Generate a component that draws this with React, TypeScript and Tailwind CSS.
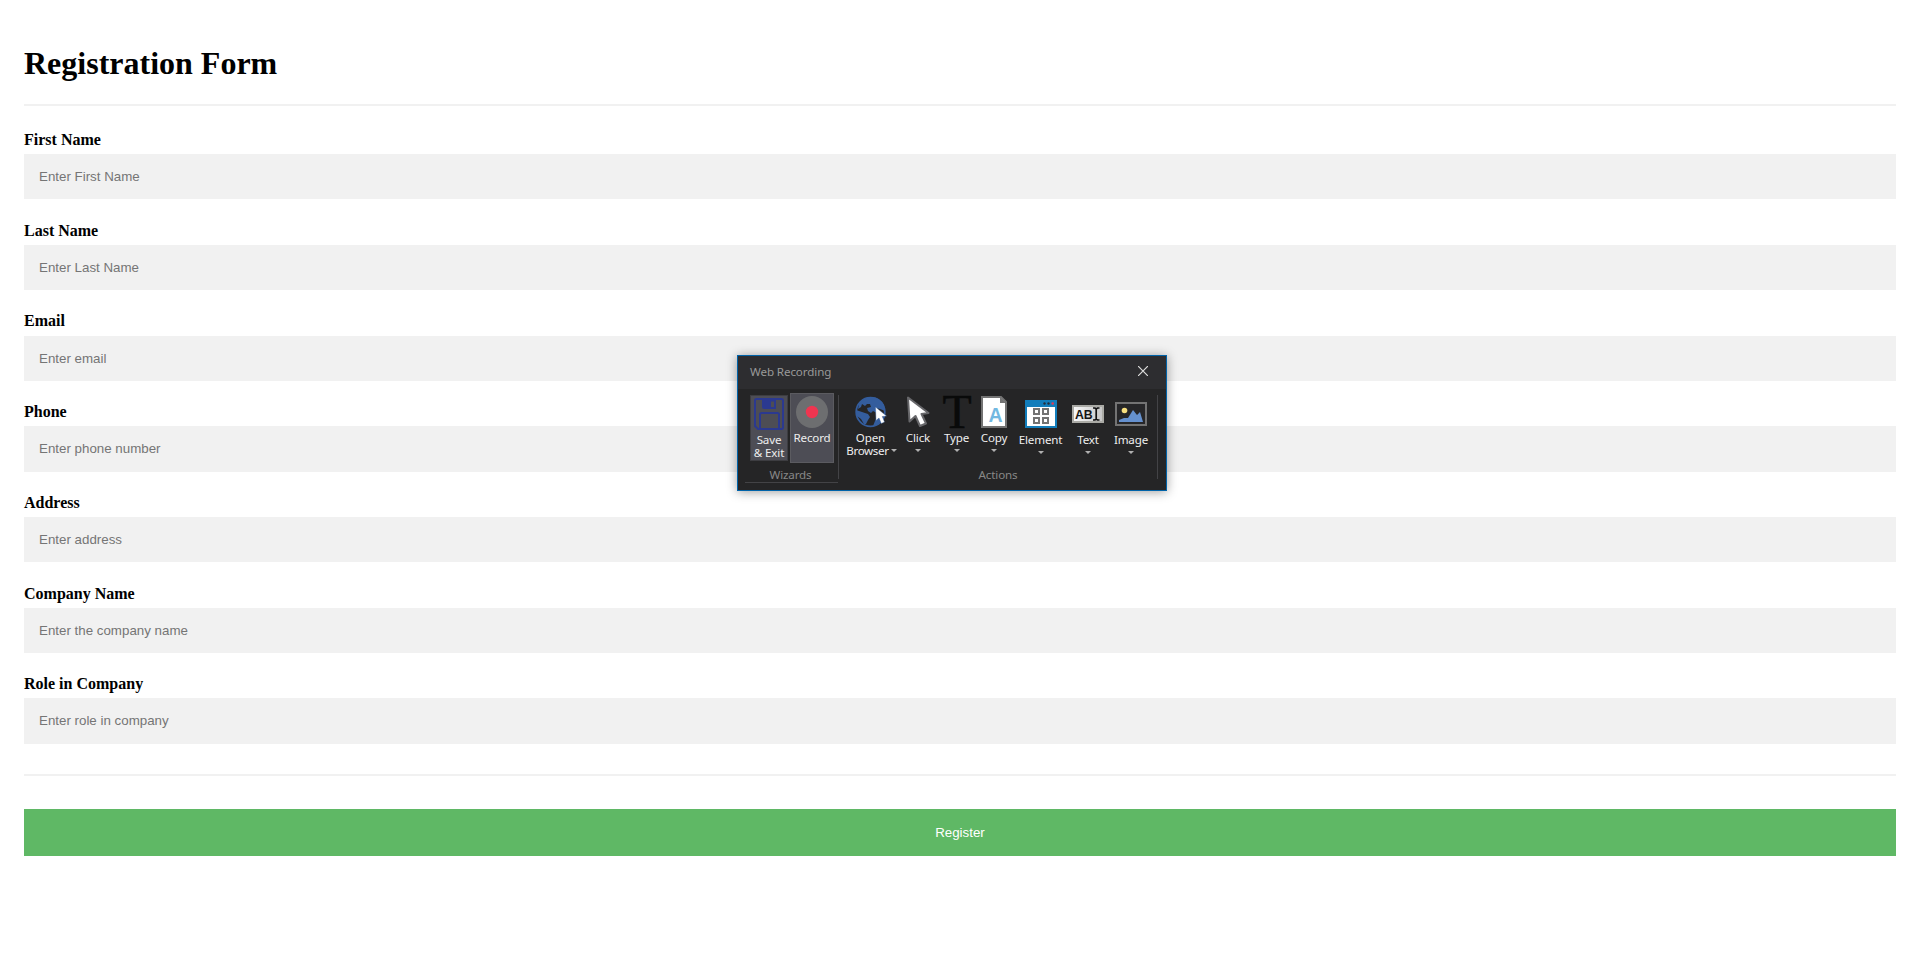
import React from "react";

const fields = [
  { label: "First Name", placeholder: "Enter First Name" },
  { label: "Last Name", placeholder: "Enter Last Name" },
  { label: "Email", placeholder: "Enter email" },
  { label: "Phone", placeholder: "Enter phone number" },
  { label: "Address", placeholder: "Enter address" },
  { label: "Company Name", placeholder: "Enter the company name" },
  { label: "Role in Company", placeholder: "Enter role in company" },
];

function SaveIcon() {
  return (
    <svg width="30" height="32" viewBox="0 0 30 32" fill="none" stroke="#2b3990" strokeWidth="2" className="shrink-0">
      <path d="M2.5 1H27.5Q29 1 29 2.5V29.5Q29 31 27.5 31H4L1 28V2.5Q1 1 2.5 1Z" />
      <path d="M8 1H22V11H10Q8 11 8 9Z" fill="#2b3990" stroke="none" />
      <path d="M17 3.5H20V9H17Z" fill="#4d4d55" stroke="none" />
      <path d="M6 31V16.500Q6 15 7.500 15H23.500Q25 15 25 16.500V31" />
    </svg>
  );
}

function RecordIcon() {
  return (
    <svg width="32" height="32" viewBox="0 0 32 32" className="shrink-0">
      <circle cx="16" cy="16" r="16" fill="#6d6e70" />
      <circle cx="16" cy="16" r="6.200" fill="#ef3550" />
    </svg>
  );
}

function GlobeIcon() {
  return (
    <svg width="32" height="32" viewBox="0 0 32 32" className="shrink-0">
      <circle cx="15.500" cy="16" r="14.300" fill="#252526" stroke="#345d9d" strokeWidth="1.800" />
      <path
        d="M4 8Q8 1 16 1Q25 1 29 9L30 15L25 13L21 12L22 17L18 15L16 17L13 15L12 12L16 11L15 8L12 8L10 10L7 8L6 11L3 13ZM1 14L7 16L13 18L15 21L13 24L11 28L9 28L6 23L2 20ZM22 20L27 24L22 29L18 30L20 25Z"
        fill="#345d9d"
      />
      <path
        d="M20.500 11L21 24.500L24 22L26.300 27.500L29.500 26L27.300 20.500L31.500 20Z"
        fill="#fff"
        stroke="#345d9d"
        strokeWidth=".4"
      />
    </svg>
  );
}

function ClickIcon() {
  return (
    <svg width="24" height="32" viewBox="0 0 24 32">
      <path
        d="M2 1.500L3.500 25.500L9.500 20L14 30L20 27.500L15.500 18L22.500 17Z"
        fill="#fff"
        stroke="#67676a"
        strokeWidth="2"
        strokeLinejoin="round"
      />
    </svg>
  );
}

function TypeIcon() {
  return (
    <svg width="30" height="32" viewBox="0 0 30 32" className="overflow-visible">
      <text
        x="0.500"
        y="31.500"
        fontSize="48"
        textLength="29"
        lengthAdjust="spacingAndGlyphs"
        fill="#090a0a"
        stroke="#090a0a"
        strokeWidth=".5"
        fontFamily="Liberation Serif, serif"
      >
        T
      </text>
    </svg>
  );
}

function CopyIcon() {
  return (
    <svg width="26" height="32" viewBox="0 0 26 32">
      <path d="M1 1H20L25 6V31H1Z" fill="#fff" stroke="#737373" strokeWidth="2" />
      <path d="M19 1V7H25Z" fill="#737373" />
      <text
        x="14.500"
        y="26"
        textAnchor="middle"
        fontSize="19.500"
        fontWeight="700"
        fill="#72b8e1"
        fontFamily="Liberation Sans, sans-serif"
      >
        A
      </text>
    </svg>
  );
}

function ElementIcon() {
  return (
    <svg width="32" height="28" viewBox="0 0 32 28">
      <path d="M0 0H32V28H0Z" fill="#127dbb" />
      <path d="M2 7H30V26H2Z" fill="#fff" />
      <g fill="#252f3b">
        <circle cx="19.500" cy="3.500" r="1.200" />
        <circle cx="23.500" cy="3.500" r="1.200" />
      </g>
      <circle cx="27.700" cy="3.500" r="1.300" fill="#e23a55" />
      <path
        d="M9 9H14V14H9ZM18 9H23V14H18ZM9 18H14V23H9ZM18 18H23V23H18Z"
        fill="none"
        stroke="#737373"
        strokeWidth="2"
      />
    </svg>
  );
}

function TextIcon() {
  return (
    <svg width="32" height="18" viewBox="0 0 32 18">
      <defs>
        <linearGradient id="plate">
          <stop stopColor="#fafafa" />
          <stop offset="1" stopColor="#c5c5c5" />
        </linearGradient>
      </defs>
      <path d="M1 1H31V17H1Z" fill="url(#plate)" stroke="#aaaaa5" strokeWidth="2" />
      <text
        x="3"
        y="13.500"
        fontSize="12.500"
        fontWeight="700"
        textLength="17.500"
        lengthAdjust="spacingAndGlyphs"
        fill="#151515"
        fontFamily="Liberation Sans, sans-serif"
      >
        AB
      </text>
      <path
        d="M21 3H23L24.200 4L25.500 3H27.500M24.200 4V14M21 15H23L24.200 14L25.500 15H27.500"
        fill="none"
        stroke="#111"
        strokeWidth="1.700"
      />
    </svg>
  );
}

function ImageIcon() {
  return (
    <svg width="32" height="24" viewBox="0 0 32 24">
      <path d="M1 1H31V23H1Z" fill="#262628" stroke="#737373" strokeWidth="2" />
      <circle cx="9.500" cy="8.500" r="2.800" fill="#f7df7e" />
      <path d="M4 20V18L9 16L13 16L18 8L22 13L25 10L28 20Z" fill="#6591cf" />
    </svg>
  );
}

function Arrow() {
  return (
    <svg width="6" height="3" viewBox="0 0 6 3" className="shrink-0">
      <path d="M0 0H6L3 3Z" fill="#b0b0b0" />
    </svg>
  );
}

interface ActionProps {
  className: string;
  icon: React.ReactNode;
  label: string;
  low?: boolean;
}

function Action({ className, icon, label, low }: ActionProps) {
  return (
    <div className={`flex shrink-0 flex-col items-center ${className}`}>
      <div className="flex h-8 shrink-0 items-center justify-center">{icon}</div>
      <span className={`whitespace-nowrap leading-[13px] ${low ? "mt-[5px]" : "mt-[3px]"}`}>{label}</span>
      <div className="mt-[5px] flex">
        <Arrow />
      </div>
    </div>
  );
}

function RecordingWindow() {
  return (
    <section className="absolute left-[737px] top-[355px] flex h-[136px] w-[430px] flex-col border border-[#0063a9] bg-[#252526] font-['Noto_Sans','Open_Sans',sans-serif] text-[11.600px] tracking-[-0.15px] text-[#eeeeee] shadow-[0_1px_10px_rgba(0,0,0,0.38)]">
      <header className="flex h-[33px] shrink-0 items-center justify-between bg-[#2d2d30] pl-3 pr-[18px] text-[#999999]">
        <span className="-mt-[2px] tracking-[-0.1px]">Web Recording</span>
        <svg width="10" height="10" viewBox="0 0 10 10" className="-mt-[3px]">
          <path d="M0 0L10 10M10 0L0 10" stroke="#dddddd" strokeWidth="1.200" />
        </svg>
      </header>
      <div className="flex">
        <div className="ml-[7px] flex h-[94px] w-[93px] shrink-0 flex-col border-b border-[#434346]">
          <div className="flex h-[74px] gap-[2px] pl-[5px] pt-1">
            <button type="button" className="mt-[2px] flex h-[66px] w-[38px] flex-col items-center border border-[#3d3d41] bg-[#4d4d55] pt-[2px] leading-[13px]">
              <SaveIcon />
              <span className="mt-[3px] whitespace-nowrap">Save<br />&amp; Exit</span>
            </button>
            <button type="button" className="flex h-[70px] w-[44px] flex-col items-center border border-[#5b5b60] bg-[#4d4d55] pt-[2px] leading-[13px]">
              <RecordIcon />
              <span className="mt-[3px]">Record</span>
            </button>
          </div>
          <div className="pt-[5px] pr-[2px] text-center leading-[13px] text-[#888888]">Wizards</div>
        </div>
        <div className="mt-[6px] h-[84px] w-px shrink-0 bg-[#434346]" />
        <div className="w-[318px] shrink-0">
          <div className="flex h-[79px] pt-[7px]">
            <div className="flex w-[63px] shrink-0 flex-col items-center">
              <GlobeIcon />
              <span className="mt-[3px] leading-[13px]">Open</span>
              <div className="flex items-center gap-[2px] pl-[2px] leading-[13px]">
                <span className="tracking-[-0.35px]">Browser</span>
                <Arrow />
              </div>
            </div>
            <Action className="w-8" icon={<ClickIcon />} label="Click" />
            <Action className="w-[45px]" icon={<TypeIcon />} label="Type" />
            <Action className="w-[30px]" icon={<CopyIcon />} label="Copy" />
            <Action className="w-[63px]" icon={<div className="pt-1"><ElementIcon /></div>} label="Element" low />
            <Action className="w-8" icon={<div className="pt-[4px]"><TextIcon /></div>} label="Text" low />
            <Action className="w-[54px]" icon={<div className="pt-[4px]"><ImageIcon /></div>} label="Image" low />
          </div>
          <div className="text-center leading-[13px] text-[#888888]">Actions</div>
        </div>
        <div className="mt-[6px] h-[84px] w-px shrink-0 bg-[#434346]" />
      </div>
    </section>
  );
}

export default function App() {
  return (
    <div className="relative min-h-[962px] bg-white px-6 pt-[44px] text-black">
      <form>
        <h1 className="h-[60px] font-['Liberation_Serif',serif] text-[32px] font-bold leading-[38px]">
          Registration Form
        </h1>
        <div className="h-[2px] bg-[#f1f1f1]" />
        <div className="pt-[24.150px]">
          {fields.map((field) => (
            <div key={field.label} className="h-[90.672px]">
              <label className="block h-[24.250px] font-['Liberation_Serif',serif] text-[16px] font-bold leading-[20px]">
                {field.label}
              </label>
              <input
                placeholder={field.placeholder}
                className="block h-[45.095px] w-full bg-[#f1f1f1] px-[15px] font-['Liberation_Sans',sans-serif] text-[13.333px] outline-none placeholder:text-[#757575]"
              />
            </div>
          ))}
        </div>
        <div className="mt-[9.160px] h-[2px] bg-[#f1f1f1]" />
        <button
          type="button"
          className="mt-[33px] block h-[47px] w-full bg-[#5fb865] pt-[1px] font-['Liberation_Sans',sans-serif] text-[13.333px] text-white"
        >
          Register
        </button>
      </form>
      <RecordingWindow />
    </div>
  );
}
